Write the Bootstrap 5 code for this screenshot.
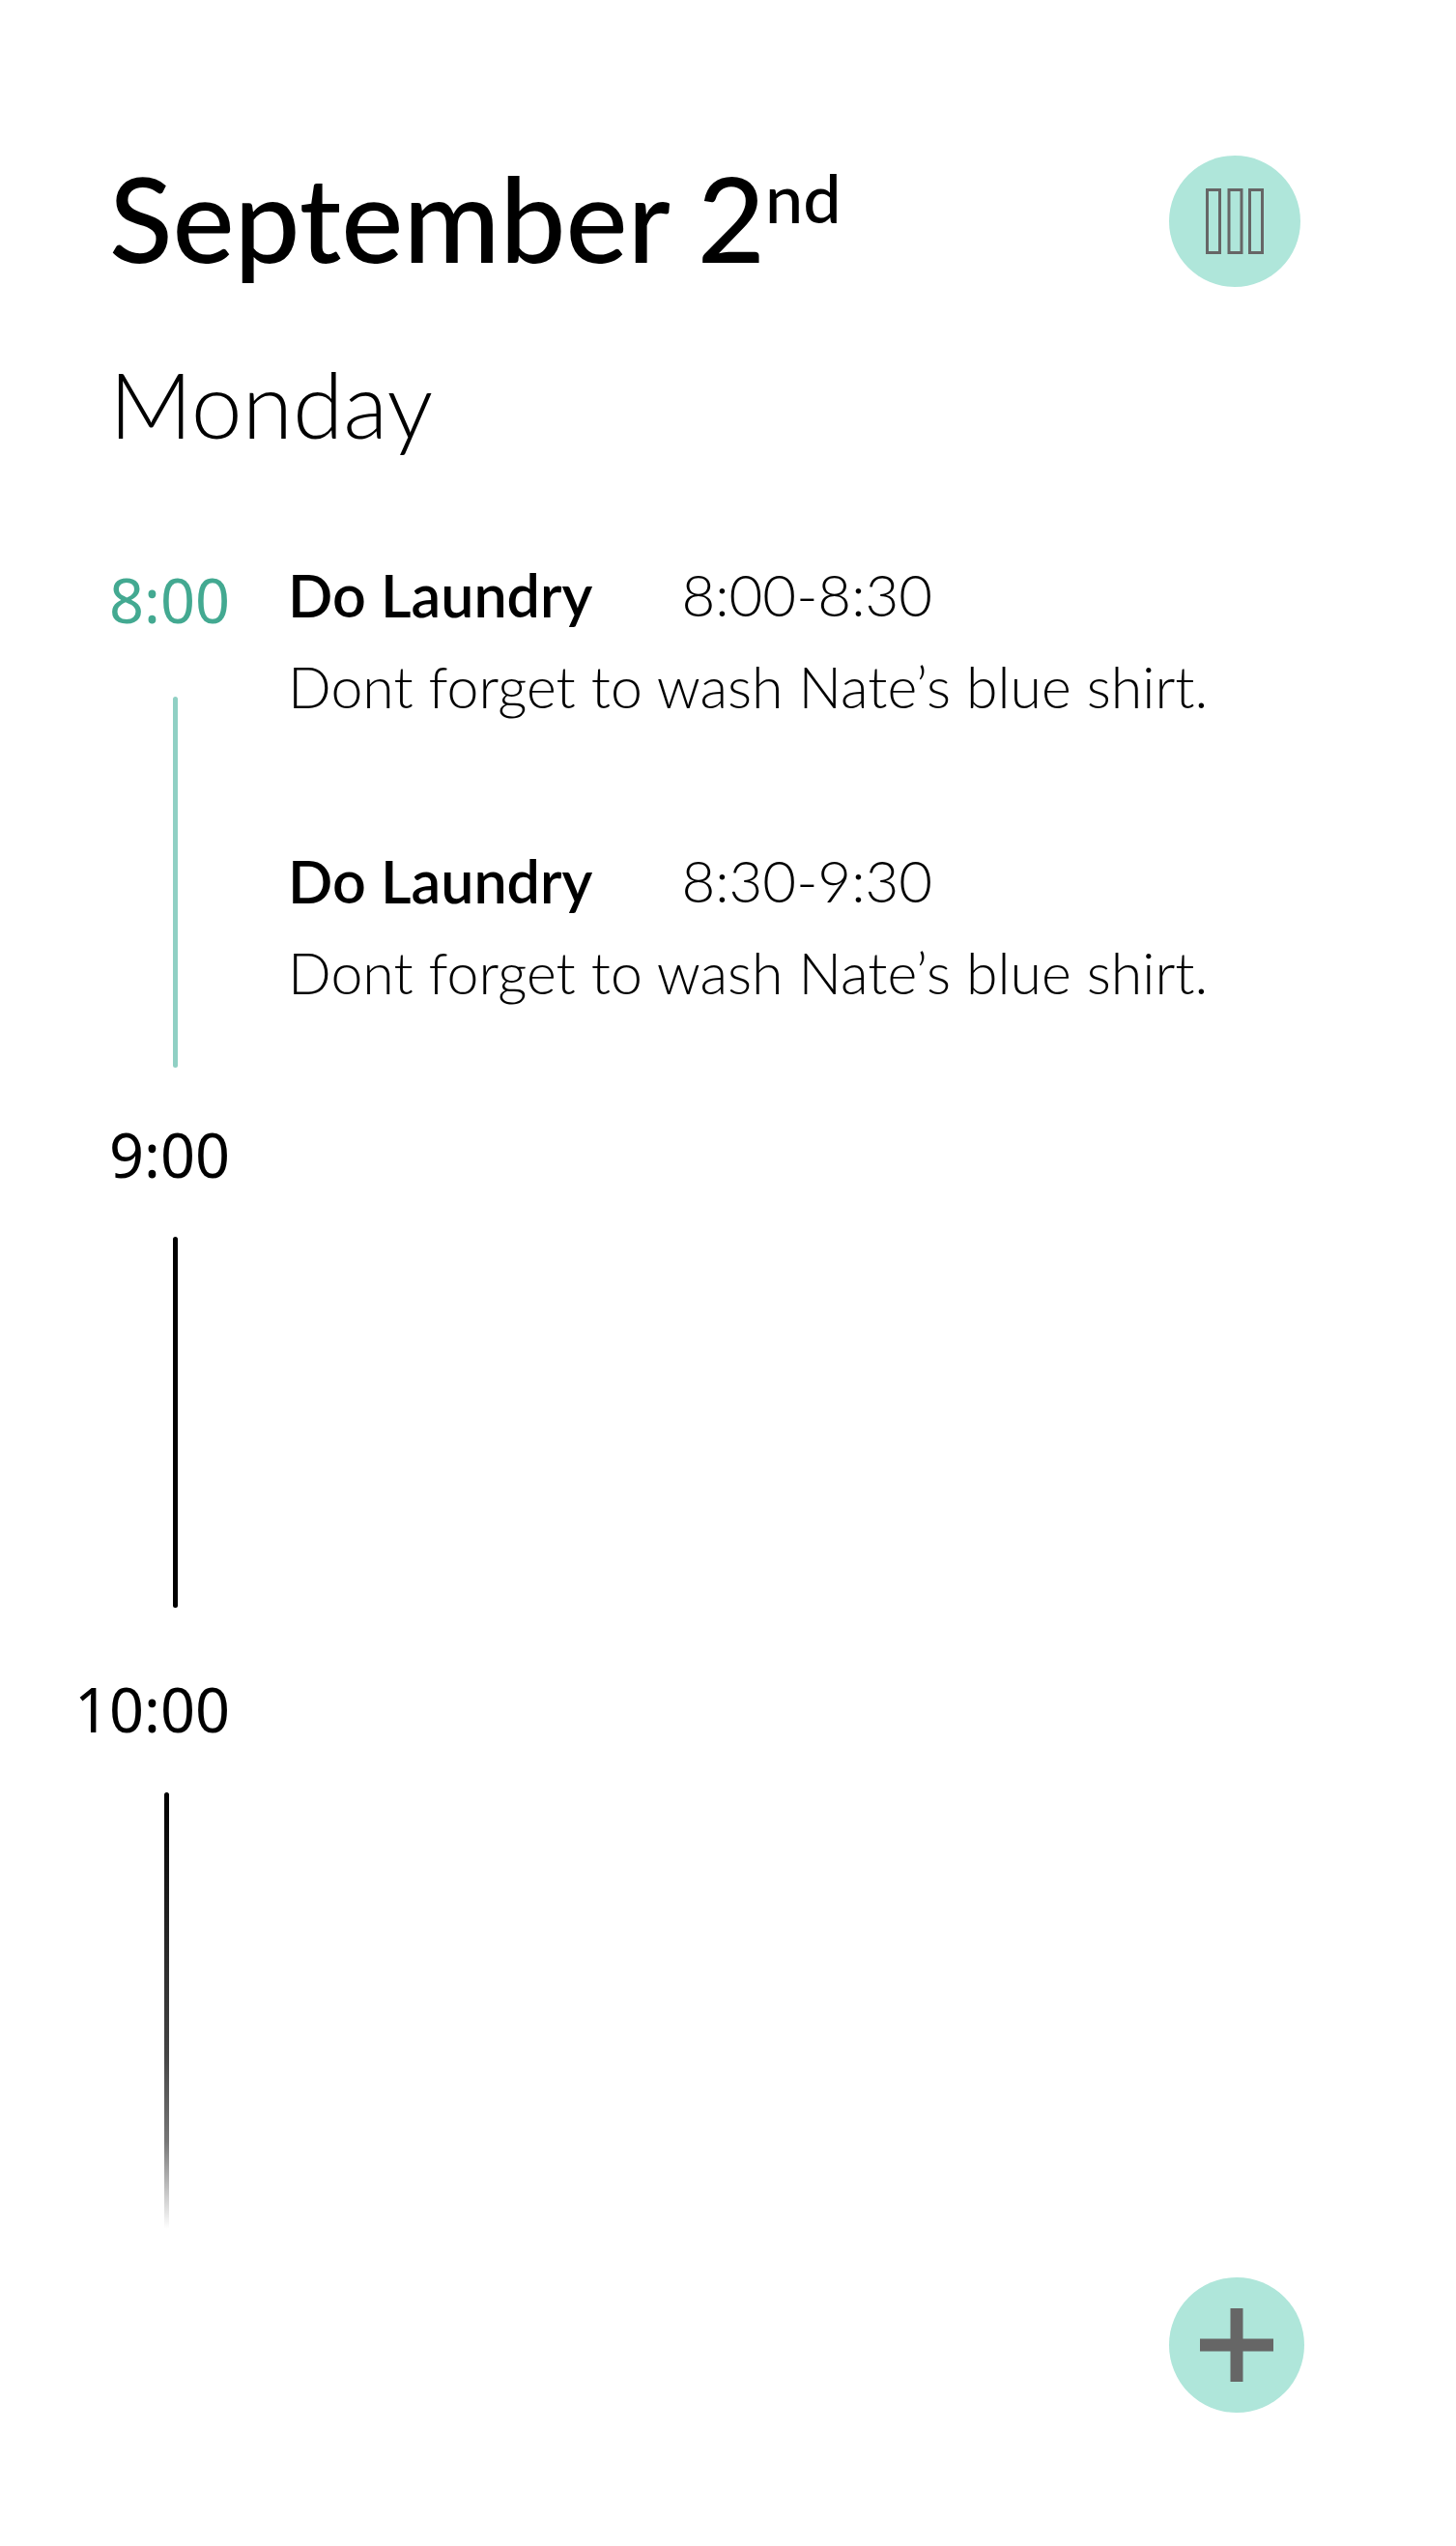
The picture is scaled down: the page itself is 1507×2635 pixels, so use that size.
<!DOCTYPE html>
<html lang="en">
<head>
<meta charset="utf-8">
<meta name="viewport" content="width=device-width, initial-scale=1">
<title>September 2nd</title>
<link href="https://cdn.jsdelivr.net/npm/bootstrap@5.3.0/dist/css/bootstrap.min.css" rel="stylesheet">
<style>
  body { font-family: Lato, sans-serif; color: #000; background: #fff; }
  .planner { padding: 153px 157px 139px 0; }
  .planner-head { padding-left: 113px; }
  .day-title { font-size: 121px; line-height: 146px; font-weight: 500; }
  .day-title sup { font-size: 70px; line-height: 0; top: 0; vertical-align: 41px; }
  .weekday { font-size: 95px; line-height: 116px; font-weight: 300; margin: 60px 0 93px; padding-left: 113px; }
  .round-slot { width: 140px; }
  .round-btn { width: 136px; height: 136px; background: #afe6da; border: 0; }
  .round-btn-lg { width: 140px; height: 140px; }
  .hour { min-height: 574px; gap: 60px; }
  .hour-side { width: 238px; padding-top: 21px; }
  .hour-label { font: 400 63px/64px "Noto Sans", sans-serif; }
  .hour-line { width: 5px; height: 384px; border-radius: 3px; background: #000; margin: 53px 54px 0 0; }
  .hour-now .hour-label { color: #43a991; }
  .hour-now .hour-line { background: #90d0c4; margin-top: 68px; }
  .hour-last .hour-line { height: 452px; margin: 54px 63px 0 0; background: linear-gradient(#000, #222 30%, #444 60%, #777 80%, #fff); }
  .event-list { gap: 106px; }
  .event-row { font-size: 60px; line-height: 95px; font-weight: 300; }
  .event-note { font-size: 59px; }
  .event-name { font-size: 61px; line-height: 95px; font-weight: 600; }
  .event-head { gap: 92px; }
  .add-bar { padding-top: 50px; }
</style>
</head>
<body>
<main class="planner">
  <header class="planner-head d-flex justify-content-between">
    <h1 class="day-title mb-0">September 2<sup>nd</sup></h1>
    <div class="round-slot flex-shrink-0 pt-2">
      <button type="button" class="round-btn rounded-circle d-flex align-items-center justify-content-center p-0" aria-label="Change view">
        <svg width="62" height="70" viewBox="0 0 62 70" fill="none" stroke="#666" stroke-width="3" aria-hidden="true"><path d="M2.500 2.500h13v65h-13zM25 2.500h13v65H25zM46.500 2.500h13v65h-13z"/></svg>
      </button>
    </div>
  </header>
  <p class="weekday">Monday</p>

  <section class="hour hour-now d-flex">
    <div class="hour-side flex-shrink-0 d-flex flex-column align-items-end">
      <time class="hour-label">8:00</time>
      <div class="hour-line"></div>
    </div>
    <div class="event-list d-flex flex-column">
      <article class="event-row">
        <div class="event-head d-flex"><h2 class="event-name mb-0">Do Laundry</h2><span>8:00-8:30</span></div>
        <p class="event-note mb-0">Dont forget to wash Nate’s blue shirt.</p>
      </article>
      <article class="event-row">
        <div class="event-head d-flex"><h2 class="event-name mb-0">Do Laundry</h2><span>8:30-9:30</span></div>
        <p class="event-note mb-0">Dont forget to wash Nate’s blue shirt.</p>
      </article>
    </div>
  </section>
  <section class="hour d-flex">
    <div class="hour-side flex-shrink-0 d-flex flex-column align-items-end">
      <time class="hour-label">9:00</time>
      <div class="hour-line"></div>
    </div>
  </section>
  <section class="hour hour-last d-flex">
    <div class="hour-side flex-shrink-0 d-flex flex-column align-items-end">
      <time class="hour-label">10:00</time>
      <div class="hour-line"></div>
    </div>
  </section>

  <div class="add-bar d-flex justify-content-end">
    <button type="button" class="round-btn round-btn-lg rounded-circle d-flex align-items-center justify-content-center p-0" aria-label="Add event">
      <svg width="78" height="78" viewBox="0 0 78 78" stroke="#666" stroke-width="13" aria-hidden="true"><path d="M39 1v76M1 39h76"/></svg>
    </button>
  </div>
</main>
<script src="https://cdn.jsdelivr.net/npm/bootstrap@5.3.0/dist/js/bootstrap.bundle.min.js"></script>
</body>
</html>
